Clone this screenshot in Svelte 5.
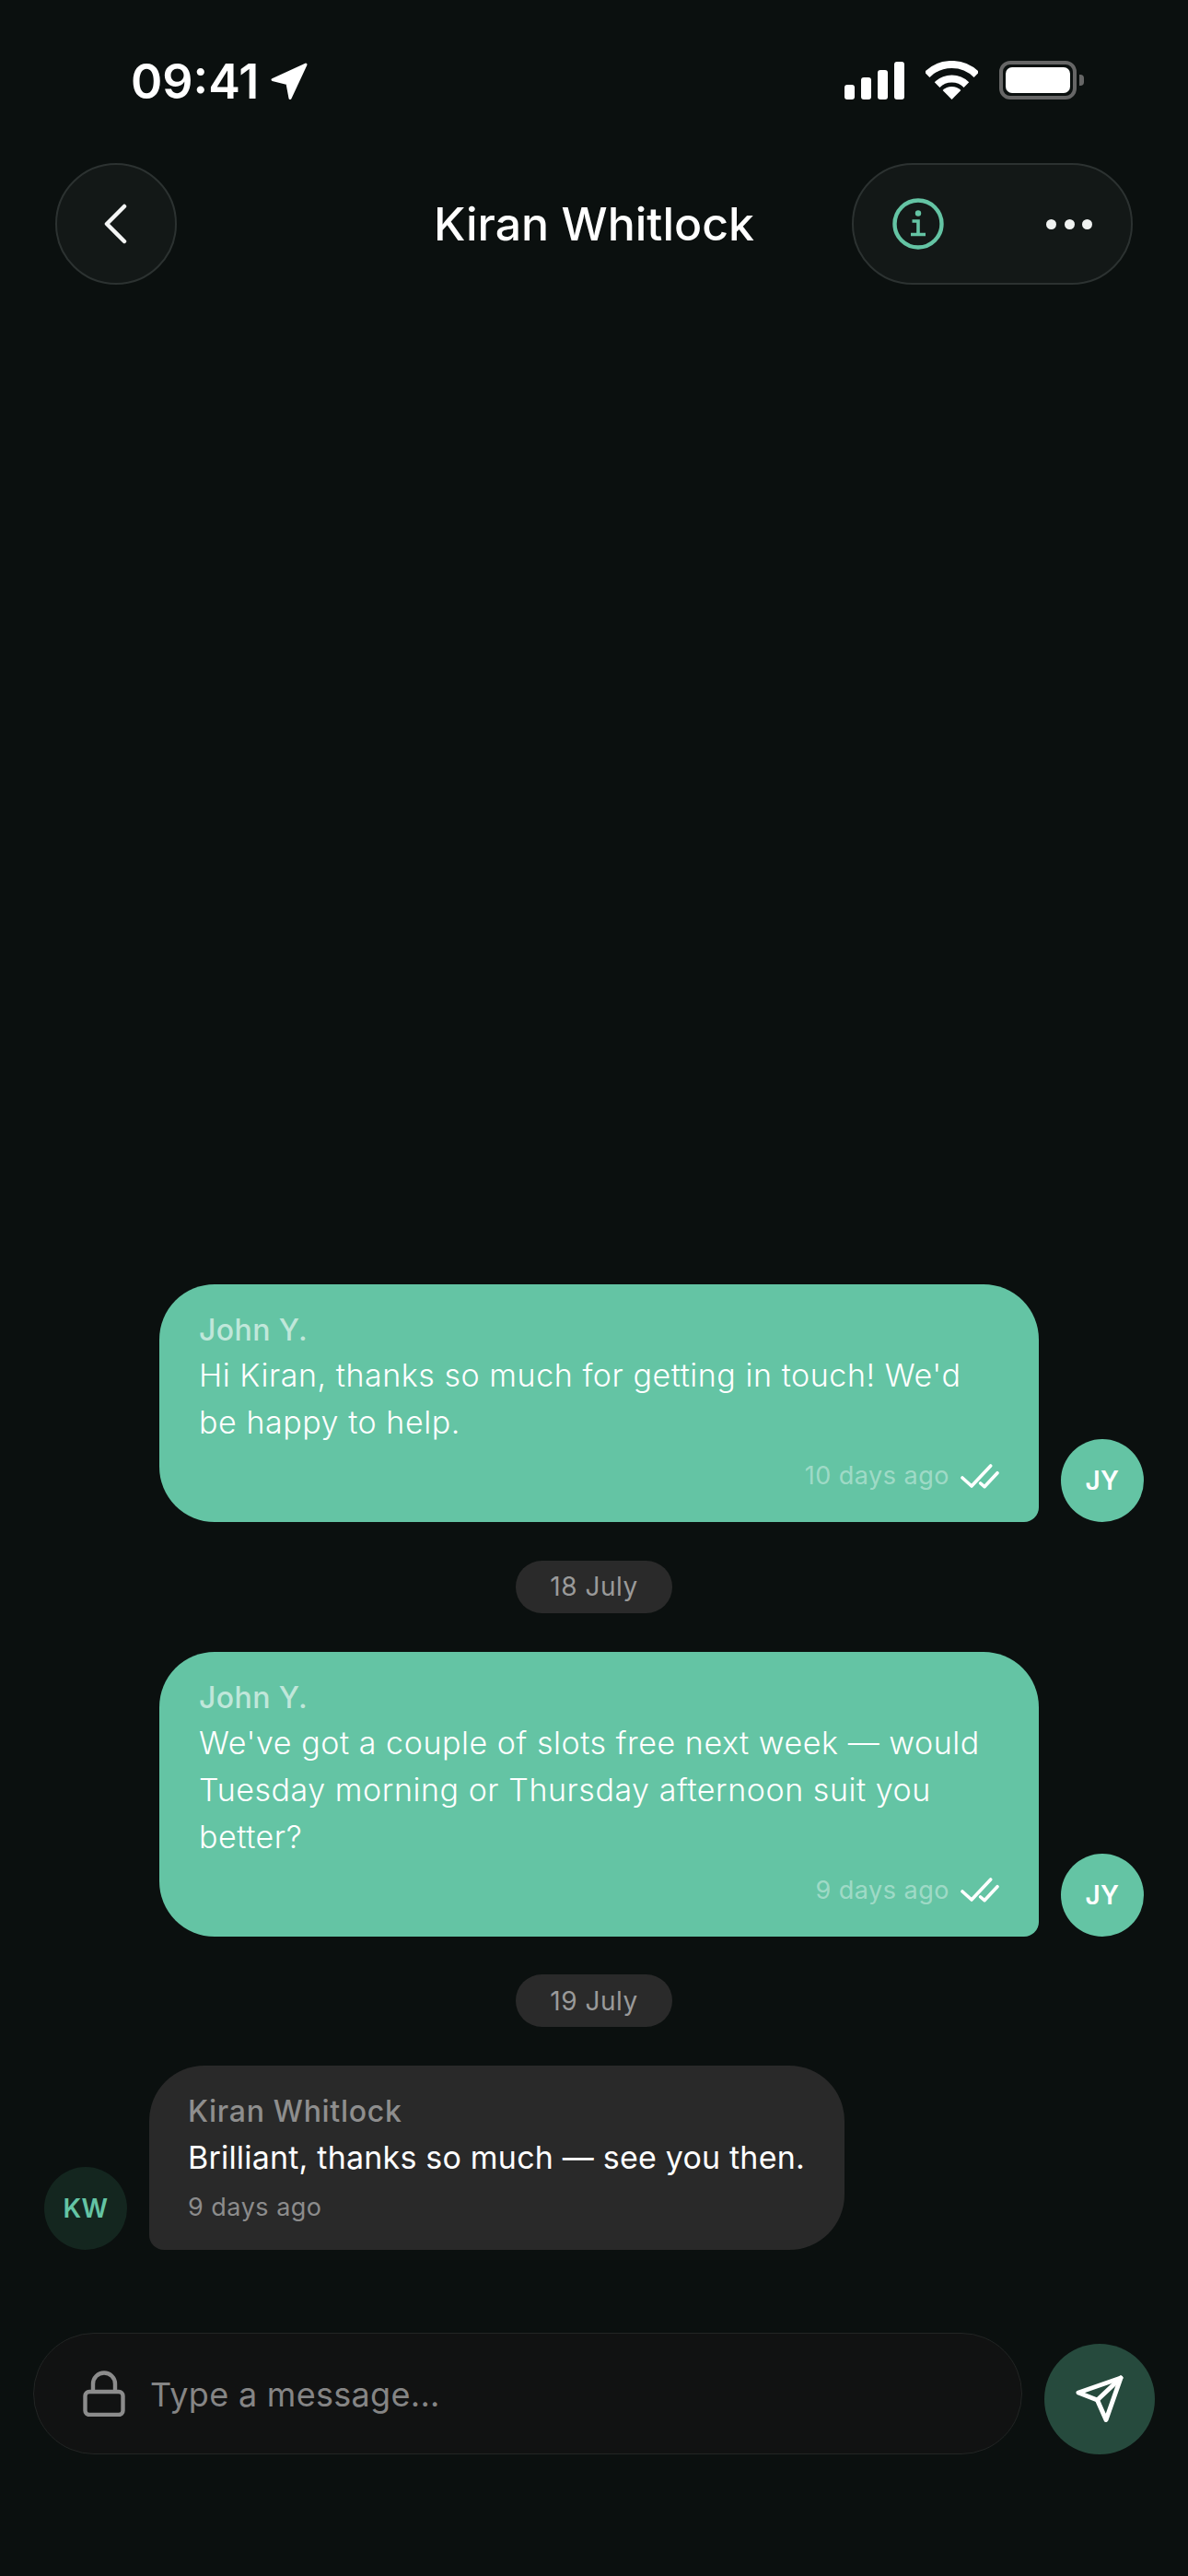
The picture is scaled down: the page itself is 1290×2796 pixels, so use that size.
<script lang="ts">
  interface Message {
    name: string;
    lines: string;
    time: string;
  }

  const first: Message = {
    name: "John Y.",
    lines: "Hi Kiran, thanks so much for getting in touch! We'd be happy to help.",
    time: "10 days ago",
  };
  const second: Message = {
    name: "John Y.",
    lines: "We've got a couple of slots free next week — would Tuesday morning or Thursday afternoon suit you better?",
    time: "9 days ago",
  };
</script>

{#snippet outgoing(msg: Message)}
  <div class="row out">
    <div class="bubble green">
      <div class="name">{msg.name}</div>
      <p class="body">{msg.lines}</p>
      <div class="meta">
        <span>{msg.time}</span>
        <svg class="checks" viewBox="0 0 42 27" width="42" height="27" fill="none" stroke="#fff" stroke-width="3.6" stroke-linecap="round" stroke-linejoin="round">
          <path d="M2 15 12 24 32.7 2" />
          <path d="M21.7 21 26 24.7 40 9.7" />
        </svg>
      </div>
    </div>
    <div class="avatar me">JY</div>
  </div>
{/snippet}

<div class="screen">
  <div class="status">
    <div class="clock">
      <span>09:41</span>
      <svg viewBox="0 0 42 42" width="42" height="42" fill="#fff" stroke="#fff" stroke-width="3" stroke-linejoin="round">
        <path d="M39 2 3 18.5 19 22.5 22 38.5Z" />
      </svg>
    </div>
    <div class="indicators">
      <svg viewBox="0 0 65 41" width="65" height="41" fill="#fff">
        <rect x="0" y="25" width="11" height="16" rx="3" />
        <rect x="18" y="17" width="11" height="24" rx="3" />
        <rect x="36" y="9" width="11" height="32" rx="3" />
        <rect x="54" y="0" width="11" height="41" rx="3" />
      </svg>
      <svg class="wifi" viewBox="0 0 57 42" width="57" height="42" fill="none" stroke="#fff" stroke-width="8">
        <path d="M1.6 15.1A38 38 0 0 1 55.4 15.1" />
        <path d="M12.6 26.1A22.5 22.5 0 0 1 44.4 26.1" />
        <path d="M28.5 42 18.6 32.1A14 14 0 0 1 38.4 32.1Z" fill="#fff" stroke="none" />
      </svg>
      <div class="battery"><div class="charge"></div></div>
    </div>
  </div>

  <header class="topbar">
    <button class="round" aria-label="Back">
      <svg viewBox="0 0 40 52" width="40" height="52" fill="none" stroke="#f4f5f5" stroke-width="4.5" stroke-linecap="round" stroke-linejoin="round">
        <path d="M29 7 10 26 29 45" />
      </svg>
    </button>
    <h1>Kiran Whitlock</h1>
    <div class="actions">
      <svg viewBox="0 0 56 56" width="56" height="56" fill="none" stroke="#64c4a4">
        <circle cx="28" cy="28" r="25.5" stroke-width="4.4" />
        <circle cx="28" cy="16.5" r="3.2" fill="#64c4a4" stroke="none" />
        <path d="M21.5 25H28V39.5M20 39.5H36" stroke-width="3.6" />
      </svg>
      <div class="dots"><i></i><i></i><i></i></div>
    </div>
  </header>

  <main class="thread">
    {@render outgoing(first)}
    <div class="date">18 July</div>
    {@render outgoing(second)}
    <div class="date">19 July</div>
    <div class="row in">
      <div class="avatar them">KW</div>
      <div class="bubble grey">
        <div class="name">Kiran Whitlock</div>
        <p class="body">Brilliant, thanks so much — see you then.</p>
        <div class="meta">9 days ago</div>
      </div>
    </div>
  </main>

  <footer class="composer">
    <div class="field">
      <svg viewBox="0 0 46 50" width="46" height="50" fill="none" stroke="#8c8c8c" stroke-width="4.4" stroke-linejoin="round">
        <rect x="2.5" y="23" width="41" height="25" rx="4.5" />
        <path d="M11 23V14.5a12 12 0 0 1 24 0V23" />
      </svg>
      <span class="placeholder">Type a message...</span>
    </div>
    <button class="send" aria-label="Send">
      <svg viewBox="0 0 120 120" width="120" height="120" fill="none" stroke="#fff" stroke-width="5" stroke-linecap="round" stroke-linejoin="round">
        <path d="M83 37 37 53 57.5 61 67 82.5Z" />
        <path d="M57.5 61 83 37" />
      </svg>
    </button>
  </footer>
</div>

<style>
  :global(body) {
    margin: 0;
    background: #0b100f;
  }

  .screen {
    width: 1290px;
    height: 2796px;
    display: flex;
    flex-direction: column;
    background: #0b100f;
    color: #fff;
    font-family: Inter, "Liberation Sans", sans-serif;
    overflow: hidden;
  }

  .status {
    height: 177px;
    box-sizing: border-box;
    padding: 62px 121px 0 142px;
    display: flex;
    justify-content: space-between;
    align-items: flex-start;
  }

  .clock {
    display: flex;
    align-items: center;
    gap: 12px;
    font-size: 52px;
    font-weight: 600;
    line-height: 54px;
  }

  .indicators {
    display: flex;
    align-items: center;
    gap: 23px;
    padding-top: 4px;
  }

  .battery {
    width: 84px;
    height: 42px;
    box-sizing: border-box;
    border: 4px solid #666;
    border-radius: 12px;
    padding: 3px;
    position: relative;
  }

  .battery::after {
    content: "";
    position: absolute;
    right: -12px;
    top: 11px;
    width: 5px;
    height: 12px;
    background: #666;
    border-radius: 0 4px 4px 0;
  }

  .charge {
    height: 100%;
    background: #fff;
    border-radius: 7px;
  }

  .topbar {
    display: grid;
    grid-template-columns: 1fr auto 1fr;
    align-items: center;
    padding: 0 60px;
  }

  .round {
    width: 132px;
    height: 132px;
    padding: 0;
    display: flex;
    align-items: center;
    justify-content: center;
    background: #131817;
    border: 2px solid #2c3231;
    border-radius: 50%;
  }

  h1 {
    margin: 0;
    font-size: 50px;
    font-weight: 500;
    line-height: 60px;
  }

  .actions {
    justify-self: end;
    width: 305px;
    height: 132px;
    box-sizing: border-box;
    padding: 0 42px 0 42px;
    display: flex;
    align-items: center;
    justify-content: space-between;
    background: #131817;
    border: 2px solid #2c3231;
    border-radius: 66px;
  }

  .dots {
    display: flex;
    gap: 8.5px;
  }

  .dots i {
    width: 11px;
    height: 11px;
    background: #f0f2f1;
    border-radius: 50%;
  }

  .thread {
    flex: 1;
    display: flex;
    flex-direction: column;
    justify-content: flex-end;
    gap: 41.75px;
    padding-bottom: 90px;
  }

  .row {
    display: flex;
    align-items: flex-end;
    gap: 24px;
  }

  .row.out {
    justify-content: flex-end;
    padding-right: 48px;
  }

  .row.in {
    padding-left: 48px;
  }

  .bubble {
    box-sizing: border-box;
    border-radius: 60px;
    padding: 30px 43px 0;
  }

  .green {
    width: 955px;
    background: #64c4a4;
    border-bottom-right-radius: 16px;
    padding-bottom: 32px;
  }

  .grey {
    width: 755px;
    background: #292929;
    border-bottom-left-radius: 16px;
    padding-left: 42px;
    padding-bottom: 28px;
  }

  .name {
    font-size: 32px;
    font-weight: 500;
    line-height: 40px;
    letter-spacing: 0.7px;
  }

  .green .name {
    color: rgba(255, 255, 255, 0.6);
    letter-spacing: 0.4px;
  }

  .grey .name {
    color: #8e8e8e;
  }

  .body {
    margin: 3px 0 0;
    font-size: 34px;
    font-weight: 300;
    line-height: 51px;
    letter-spacing: 0.55px;
    color: #fff;
  }

  .grey .body {
    margin-top: 4px;
    font-weight: 400;
    letter-spacing: 0.2px;
    white-space: nowrap;
  }

  .meta {
    font-size: 27px;
    line-height: 36px;
    font-weight: 400;
    letter-spacing: 0.5px;
  }

  .green .meta {
    margin-top: 15px;
    display: flex;
    justify-content: flex-end;
    align-items: center;
    gap: 12px;
    color: rgba(255, 255, 255, 0.4);
  }

  .grey .meta {
    margin-top: 11px;
    color: #8c8c8c;
  }

  .avatar {
    flex: none;
    width: 90px;
    height: 90px;
    display: flex;
    align-items: center;
    justify-content: center;
    border-radius: 50%;
    font-size: 28px;
    font-weight: 600;
    letter-spacing: 0.5px;
  }

  .me {
    background: #64c4a4;
    color: #fff;
  }

  .them {
    background: #14261f;
    color: #64c4a4;
  }

  .date {
    align-self: center;
    width: 170px;
    height: 57px;
    display: flex;
    align-items: center;
    justify-content: center;
    background: #2a2a2a;
    border-radius: 29px;
    color: #9a9a9a;
    font-size: 28px;
    font-weight: 400;
    letter-spacing: 0.5px;
  }

  .composer {
    display: flex;
    align-items: flex-end;
    gap: 24px;
    padding: 0 36px 132px;
  }

  .field {
    flex: 1;
    height: 132px;
    box-sizing: border-box;
    padding-left: 53px;
    display: flex;
    align-items: center;
    gap: 27px;
    background: #111212;
    border: 1.5px solid #222524;
    border-radius: 66px;
  }

  .placeholder {
    color: #858585;
    font-size: 36px;
    font-weight: 400;
    letter-spacing: 0.3px;
    padding-top: 2px;
  }

  .send {
    flex: none;
    width: 120px;
    height: 120px;
    padding: 0;
    background: #264a3d;
    border: none;
    border-radius: 50%;
  }

  .send svg {
    display: block;
  }
</style>
